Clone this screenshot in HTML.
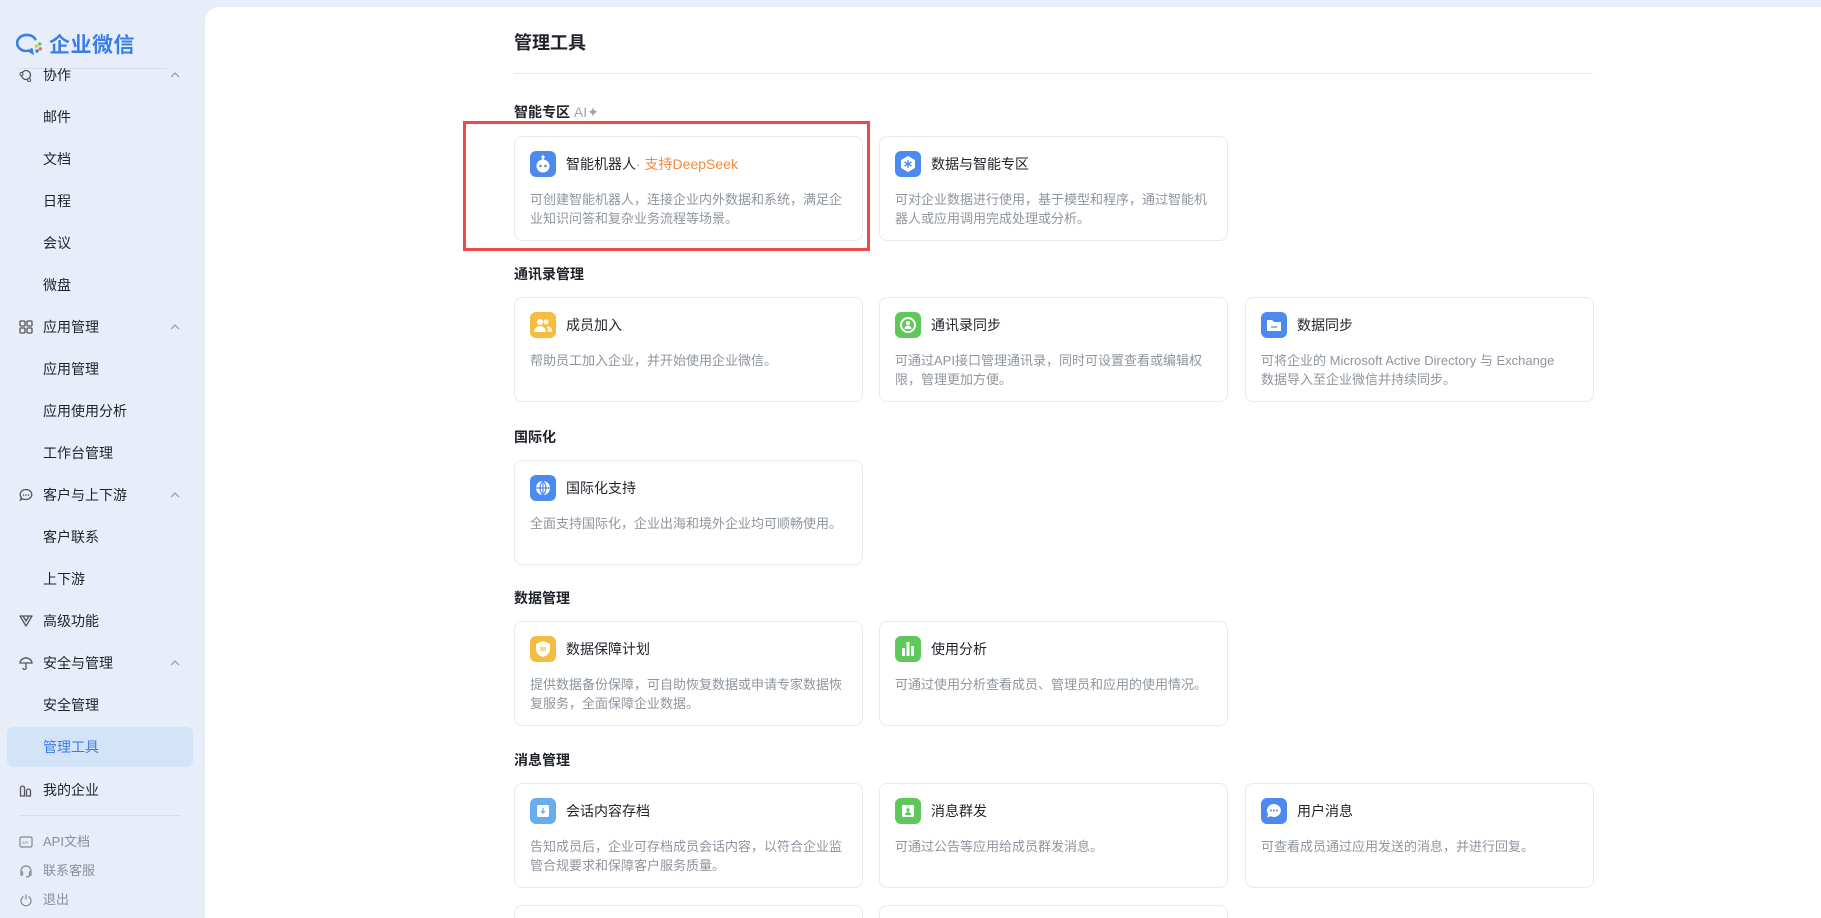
<!DOCTYPE html>
<html><head><meta charset="utf-8">
<style>
*{margin:0;padding:0;box-sizing:border-box}
html{width:1821px;height:918px;overflow:hidden}
body{width:1821px;height:918px;overflow:hidden;background:#e7eefa;font-family:"Liberation Sans","Noto Sans CJK SC",sans-serif;position:relative;color:#1f2329}
.abs{position:absolute}
.logo{left:16px;top:29px;display:flex;align-items:center}
.logo span{font-size:21px;font-weight:bold;color:#3a7ee8;margin-left:5px;letter-spacing:0.5px}
.clip{left:0;top:68px;width:204px;height:850px;overflow:hidden}
.it{position:absolute;left:0;width:204px;height:30px;font-size:14px;line-height:30px;color:#1f2329}
.it .t{position:absolute;left:43px}
.it .ic{position:absolute;left:19px;top:8px;width:14px;height:14px}
.it .ch{position:absolute;left:170px;top:10px;width:10px;height:10px}
.active{position:absolute;left:7px;top:659px;width:186px;height:40px;background:#d3e3f8;border-radius:6px}
.main{left:205px;top:7px;width:1616px;height:911px;background:#fff;border-top-left-radius:14px}
.h1{left:514px;top:29px;font-size:18px;font-weight:bold;color:#1f2329}
.hr{left:514px;top:73px;width:1079px;height:1px;background:#e6e8eb}
.sec{left:514px;font-size:14px;font-weight:bold;line-height:20px}
.card{position:absolute;width:349px;height:105px;border:1px solid #e8eaed;border-radius:8px;background:#fff}
.card .ico{position:absolute;left:15px;top:14px;width:26px;height:26px;border-radius:6px}
.card .ti{position:absolute;left:51px;top:17px;font-size:14px;line-height:20px;color:#1f2329}
.card .de{position:absolute;left:15px;top:53px;width:318px;font-size:13px;line-height:19px;color:#8f959e}
.red{left:463px;top:121px;width:407px;height:130px;border:3px solid #f04848}
</style></head><body>
<div class="abs logo">
<svg width="28" height="24" viewBox="0 0 26 22"><path d="M18 6.5A9 7.5 0 1 0 9 17.5c1 0 2-.1 2.9-.4L15 19l-.6-3" fill="none" stroke="#3a7ee8" stroke-width="2.4" stroke-linecap="round"/><circle cx="19" cy="13" r="1.6" fill="#f5bd3f"/><circle cx="22" cy="11" r="1.6" fill="#5ec95a"/><circle cx="22.5" cy="15.5" r="1.6" fill="#f46b3b"/><circle cx="19.5" cy="17.5" r="1.6" fill="#3a7ee8"/></svg>
<span>企业微信</span></div>
<div class="abs clip">
<div class="active" style="top:659px"></div>
</div>
<div class="abs" style="top:68px;height:1px;background:#d8dde6;left:17px;width:150px"></div>
<div id="side"></div>
<div class="abs main"></div>
<div class="abs h1">管理工具</div>
<div class="abs hr"></div>
<div class="abs sec" style="top:102px">智能专区 <span style="color:#a0a5ad;font-weight:normal">AI✦</span></div>
<div class="abs sec" style="top:264px">通讯录管理</div>
<div class="abs sec" style="top:427px">国际化</div>
<div class="abs sec" style="top:588px">数据管理</div>
<div class="abs sec" style="top:750px">消息管理</div>
<div id="cards"></div>
<div class="abs red"></div>
<script>
var S=[[75,'协作',1,'m'],[117,'邮件'],[159,'文档'],[201,'日程'],[243,'会议'],[285,'微盘'],[327,'应用管理',1,'g'],[369,'应用管理'],[411,'应用使用分析'],[453,'工作台管理'],[495,'客户与上下游',1,'c'],[537,'客户联系'],[579,'上下游'],[621,'高级功能',0,'v'],[663,'安全与管理',1,'u'],[705,'安全管理'],[747,'管理工具',0,null,1],[790,'我的企业',0,'b']];
var icons={m:'<circle cx="7" cy="7" r="4.5" fill="none" stroke="#555" stroke-width="1.3"/><circle cx="2.5" cy="6" r="1.5" fill="#e7eefa" stroke="#555"/><circle cx="10" cy="12" r="1.5" fill="#e7eefa" stroke="#555"/>',
g:'<rect x="1" y="1" width="5" height="5" rx="1" fill="none" stroke="#555" stroke-width="1.3"/><rect x="8" y="1" width="5" height="5" rx="1" fill="none" stroke="#555" stroke-width="1.3"/><rect x="1" y="8" width="5" height="5" rx="1" fill="none" stroke="#555" stroke-width="1.3"/><rect x="8" y="8" width="5" height="5" rx="1" fill="none" stroke="#555" stroke-width="1.3"/>',
c:'<path d="M7 1.5a5.8 5 0 1 1-3 9.3L1.5 12l.8-2.6A5.8 5 0 0 1 7 1.5z" fill="none" stroke="#555" stroke-width="1.3"/><circle cx="4.5" cy="7" r=".8" fill="#555"/><circle cx="7" cy="7" r=".8" fill="#555"/><circle cx="9.5" cy="7" r=".8" fill="#555"/>',
v:'<path d="M1 2l6 10 6-10zM4 2l3 5 3-5" fill="none" stroke="#555" stroke-width="1.3" stroke-linejoin="round"/>',
u:'<path d="M1 7a6 5 0 0 1 12 0zM7 7v5a1.5 1.5 0 0 1-3 0M7 1v1" fill="none" stroke="#555" stroke-width="1.3"/>',
b:'<path d="M1.5 13V5a2 2 0 0 1 4 0v8zM7.5 13V8a2 2 0 0 1 4 0v5z" fill="none" stroke="#555" stroke-width="1.3"/>'};
var h='';
S.forEach(function(s){var y=s[0]-15;if(y<68){h+='<div class="it" style="top:'+y+'px;clip-path:inset('+(68-y)+'px 0 0 0)">';}else h+='<div class="it" style="top:'+y+'px">';
if(s[3])h+='<svg class="ic" viewBox="0 0 14 14">'+icons[s[3]]+'</svg>';
h+='<span class="t" style="'+(s[4]?'color:#3a7ee8':'')+'">'+s[1]+'</span>';
if(s[2])h+='<svg class="ch" viewBox="0 0 10 10"><path d="M1 7l4-4 4 4" fill="none" stroke="#999" stroke-width="1.2"/></svg>';
h+='</div>';});
h+='<div class="abs" style="left:20px;top:815px;width:161px;height:1px;background:#d8dde6"></div>';
[[842,'API文档','<rect x="1" y="2" width="12" height="10" rx="1.5" fill="none" stroke="#888" stroke-width="1.2"/><text x="3" y="9" font-size="4" fill="#888">API</text>'],[871,'联系客服','<path d="M2 9V7a5 5 0 0 1 10 0v2M2 8h1.5v3H2zM12 8h-1.5v3H12zM11 11.5Q10 13 7 13" fill="none" stroke="#888" stroke-width="1.2"/>'],[900,'退出','<path d="M4.5 3.5a5 5 0 1 0 5 0M7 1.5v5" fill="none" stroke="#888" stroke-width="1.2"/>']].forEach(function(b){h+='<div class="it" style="top:'+(b[0]-15)+'px;font-size:13px;color:#8a8f99"><svg class="ic" viewBox="0 0 14 14">'+b[2]+'</svg><span class="t">'+b[1]+'</span></div>';});
document.getElementById('side').innerHTML=h;
var B='#4d8af0',Y='#f5bd3f',G='#5ec95a',L='#66aef0';
var W='fill="#fff"';
var ico={
robot:'<circle cx="13" cy="15" r="6.5" '+W+'/><circle cx="13" cy="6" r="1.6" '+W+'/><rect x="12.3" y="6" width="1.4" height="3" '+W+'/><circle cx="10.5" cy="15" r="1.3" fill="'+B+'"/><circle cx="15.5" cy="15" r="1.3" fill="'+B+'"/>',
data:'<path d="M13 5l7 4v8l-7 4-7-4V9z" '+W+'/><path d="M13 9v8M9.5 11l7 4M16.5 11l-7 4" stroke="'+B+'" stroke-width="1.3"/>',
user:'<circle cx="10" cy="10" r="3" '+W+'/><path d="M4 20a6 6 0 0 1 12 0z" '+W+'/><circle cx="16" cy="10" r="2.6" '+W+' opacity=".8"/><path d="M17 14a5 5 0 0 1 5 6h-4" '+W+' opacity=".8"/>',
sync:'<circle cx="13" cy="13" r="7" fill="none" stroke="#fff" stroke-width="2"/><circle cx="13" cy="11" r="2" '+W+'/><path d="M9.5 17a3.5 3.5 0 0 1 7 0z" '+W+'/>',
folder:'<path d="M6 8h5l2 2h7v9H6z" '+W+'/><path d="M10 15h6" stroke="'+B+'" stroke-width="1.3"/>',
globe:'<circle cx="13" cy="13" r="7" '+W+'/><path d="M13 6v14M6 13h14M13 6c-4 4-4 10 0 14M13 6c4 4 4 10 0 14" fill="none" stroke="'+B+'" stroke-width="1.2"/>',
shield:'<path d="M13 5l7 3v5c0 4-3 7-7 8-4-1-7-4-7-8V8z" '+W+'/><path d="M11 11v4M13 11v4M15 11v4" stroke="'+Y+'" stroke-width="1.2"/>',
chart:'<rect x="7" y="12" width="3" height="8" '+W+'/><rect x="11.5" y="6" width="3" height="14" '+W+'/><rect x="16" y="10" width="3" height="10" '+W+'/>',
arch:'<rect x="7" y="7" width="12" height="12" rx="1.5" '+W+'/><path d="M13 10v5M11 13l2 2 2-2" fill="none" stroke="'+L+'" stroke-width="1.3"/>',
mass:'<rect x="7" y="7" width="12" height="12" rx="1.5" '+W+'/><circle cx="13" cy="12" r="1.7" fill="'+G+'"/><path d="M10 17a3 3 0 0 1 6 0z" fill="'+G+'"/>',
msg:'<path d="M13 6a7 6.5 0 1 1-3.5 12.2L6 19.5l1.2-3.3A7 6.5 0 0 1 13 6z" '+W+'/><circle cx="10" cy="12.5" r="1" fill="'+B+'"/><circle cx="13" cy="12.5" r="1" fill="'+B+'"/><circle cx="16" cy="12.5" r="1" fill="'+B+'"/>'};
var X=[514,879,1245];
var C=[
[0,136,B,'robot','智能机器人<span style="color:#999">·</span><span style="color:#f5893d"> 支持DeepSeek</span>','可创建智能机器人，连接企业内外数据和系统，满足企业知识问答和复杂业务流程等场景。'],
[1,136,B,'data','数据与智能专区','可对企业数据进行使用，基于模型和程序，通过智能机器人或应用调用完成处理或分析。'],
[0,297,Y,'user','成员加入','帮助员工加入企业，并开始使用企业微信。'],
[1,297,G,'sync','通讯录同步','可通过API接口管理通讯录，同时可设置查看或编辑权限，管理更加方便。'],
[2,297,B,'folder','数据同步','可将企业的 Microsoft Active Directory 与 Exchange<br>数据导入至企业微信并持续同步。'],
[0,460,B,'globe','国际化支持','全面支持国际化，企业出海和境外企业均可顺畅使用。'],
[0,621,Y,'shield','数据保障计划','提供数据备份保障，可自助恢复数据或申请专家数据恢复服务，全面保障企业数据。'],
[1,621,G,'chart','使用分析','可通过使用分析查看成员、管理员和应用的使用情况。'],
[0,783,L,'arch','会话内容存档','告知成员后，企业可存档成员会话内容，以符合企业监管合规要求和保障客户服务质量。'],
[1,783,G,'mass','消息群发','可通过公告等应用给成员群发消息。'],
[2,783,B,'msg','用户消息','可查看成员通过应用发送的消息，并进行回复。'],
[0,905,B,'',' ',''],[1,905,B,'',' ','']];
var ch='';
C.forEach(function(c){ch+='<div class="card" style="left:'+X[c[0]]+'px;top:'+c[1]+'px'+(c[3]?'':';height:13px;border-bottom:none;border-radius:8px 8px 0 0')+'">';
if(c[3])ch+='<svg class="ico" viewBox="0 0 26 26" style="background:'+c[2]+'">'+ico[c[3]]+'</svg><div class="ti">'+c[4]+'</div><div class="de">'+c[5]+'</div>';
ch+='</div>';});
document.getElementById('cards').innerHTML=ch;
</script>
</body></html>
